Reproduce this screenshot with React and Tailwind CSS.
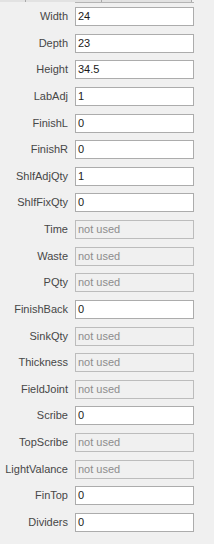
import React from "react";

const rows = [
  ["Width", "24"],
  ["Depth", "23"],
  ["Height", "34.5"],
  ["LabAdj", "1"],
  ["FinishL", "0"],
  ["FinishR", "0"],
  ["ShlfAdjQty", "1"],
  ["ShlfFixQty", "0"],
  ["Time", null],
  ["Waste", null],
  ["PQty", null],
  ["FinishBack", "0"],
  ["SinkQty", null],
  ["Thickness", null],
  ["FieldJoint", null],
  ["Scribe", "0"],
  ["TopScribe", null],
  ["LightValance", null],
  ["FinTop", "0"],
  ["Dividers", "0"],
];

export default function App() {
  return (
    <div
      className="w-[214px] h-[544px] bg-[#f0f0f0] overflow-hidden"
      style={{ fontFamily: '"Liberation Sans", Arial, sans-serif' }}
    >
      <div className="flex h-[3px]">
        <div className="w-[25px] h-[2px] bg-[#e2e2e2]" />
        <div className="w-[1px] h-[2px] bg-[#a9a9a9]" />
        <div className="w-[49px] h-[2px] bg-[#e2e2e2]" />
        <div className="flex flex-col w-[116px]">
          <div className="flex h-[2px]">
            <div className="w-[26px] bg-[#e2e2e2]" />
            <div className="w-[1px] bg-[#a9a9a9]" />
            <div className="w-[89px] bg-[#e2e2e2]" />
          </div>
          <div className="h-[1px] bg-[#b4b4b4]" />
        </div>
        <div className="flex flex-col w-[3px]">
          <div className="h-[2px] w-[1px] bg-[#a9a9a9]" />
          <div className="h-[1px] bg-[#b4b4b4]" />
        </div>
      </div>
      <div className="flex flex-col gap-[7.63px] pt-[4px]">
        {rows.map(([label, value]) => (
          <div key={label} className="flex items-center h-[19px]">
            <div className="w-[68px] text-right text-[11px] leading-[13px] text-[#474747] whitespace-nowrap">
              {label}
            </div>
            {value !== null ? (
              <div className="ml-[7px] w-[119px] h-[19px] border border-[#acacac] bg-white pl-[2px] text-[11px] leading-[17px] text-[#1a1a1a]">
                {value}
              </div>
            ) : (
              <div className="ml-[7px] w-[119px] h-[19px] border border-[#bcbcbc] bg-[#f0f0f0] pl-[2px] text-[11px] leading-[17px] text-[#8d8d8d]">
                not used
              </div>
            )}
          </div>
        ))}
      </div>
    </div>
  );
}
